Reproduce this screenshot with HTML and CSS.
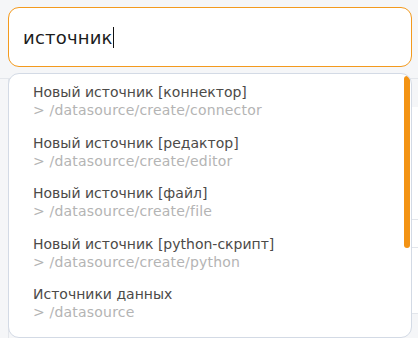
FILE: index.html
```html
<!DOCTYPE HTML>
<html lang="ru">
<head>
<meta charset="utf-8" />
<title>Поиск</title>
<link rel="stylesheet" href="styles.css">
</head>
<body>
<div class="page">
  <div class="topbar"></div>
  <div class="content">
    <div class="gap"></div>
    <div class="row r1"></div>
    <div class="row r2"></div>
    <div class="row r3"></div>
  </div>
</div>

<div class="search">
  <div class="field">
    <span class="query">источник</span><span class="caret"></span>
  </div>
  <div class="drop">
    <div class="list">
      <div class="item">
        <div class="title">Новый источник [коннектор]</div>
        <div class="path">&gt; /datasource/create/connector</div>
      </div>
      <div class="item">
        <div class="title">Новый источник [редактор]</div>
        <div class="path">&gt; /datasource/create/editor</div>
      </div>
      <div class="item">
        <div class="title">Новый источник [файл]</div>
        <div class="path">&gt; /datasource/create/file</div>
      </div>
      <div class="item">
        <div class="title">Новый источник [python-скрипт]</div>
        <div class="path">&gt; /datasource/create/python</div>
      </div>
      <div class="item">
        <div class="title">Источники данных</div>
        <div class="path">&gt; /datasource</div>
      </div>
    </div>
    <div class="thumb"></div>
  </div>
</div>
</body>
</html>
```

FILE: styles.css
```css
html, body {
  margin: 0;
  height: 100%;
  overflow: hidden;
}
body {
  background: #f5f6f8;
  font-family: "DejaVu Sans", sans-serif;
  position: relative;
}

/* page behind the search overlay */
.page {
  height: 100%;
  display: flex;
  flex-direction: column;
}
.topbar {
  height: 78px;
  flex: none;
  border-bottom: 1px solid #e3e6eb;
}
.content {
  flex: 1;
  margin-left: 8px;
  border-left: 1px solid #e3e6eb;
}
.gap {
  height: 28px;
}
.row {
  background: #fff;
  border-bottom: 1px solid #e3e6eb;
}
.r1 { height: 112px; }
.r2 { height: 27px; }
.r3 { height: 65px; }

/* search overlay */
.search {
  position: absolute;
  top: 7px;
  left: 8px;
  width: 404px;
}
.field {
  box-sizing: border-box;
  height: 60px;
  border: 1px solid #f39a1e;
  border-radius: 11px;
  background: #fff;
  display: flex;
  align-items: center;
  padding-left: 14px;
}
.query {
  font-size: 18px;
  color: #1c1c1c;
  letter-spacing: 0.2px;
}
.caret {
  width: 1px;
  height: 21px;
  background: #111;
}

.drop {
  margin-top: 6px;
  height: 265px;
  box-sizing: border-box;
  border: 1px solid #d3dae5;
  border-radius: 11px;
  background: #fff;
  position: relative;
  overflow: hidden;
}
.list {
  padding-top: 9px;
  padding-left: 24px;
}
.item {
  height: 50.5px;
}
.title {
  font-size: 14px;
  line-height: 18px;
  color: #4c4a48;
}
.path {
  font-size: 14px;
  line-height: 18px;
  letter-spacing: 0.2px;
  color: #b4b4b4;
}
.thumb {
  position: absolute;
  top: 2px;
  right: 1px;
  width: 6px;
  height: 172px;
  border-radius: 3px;
  background: #f39314;
}
```
